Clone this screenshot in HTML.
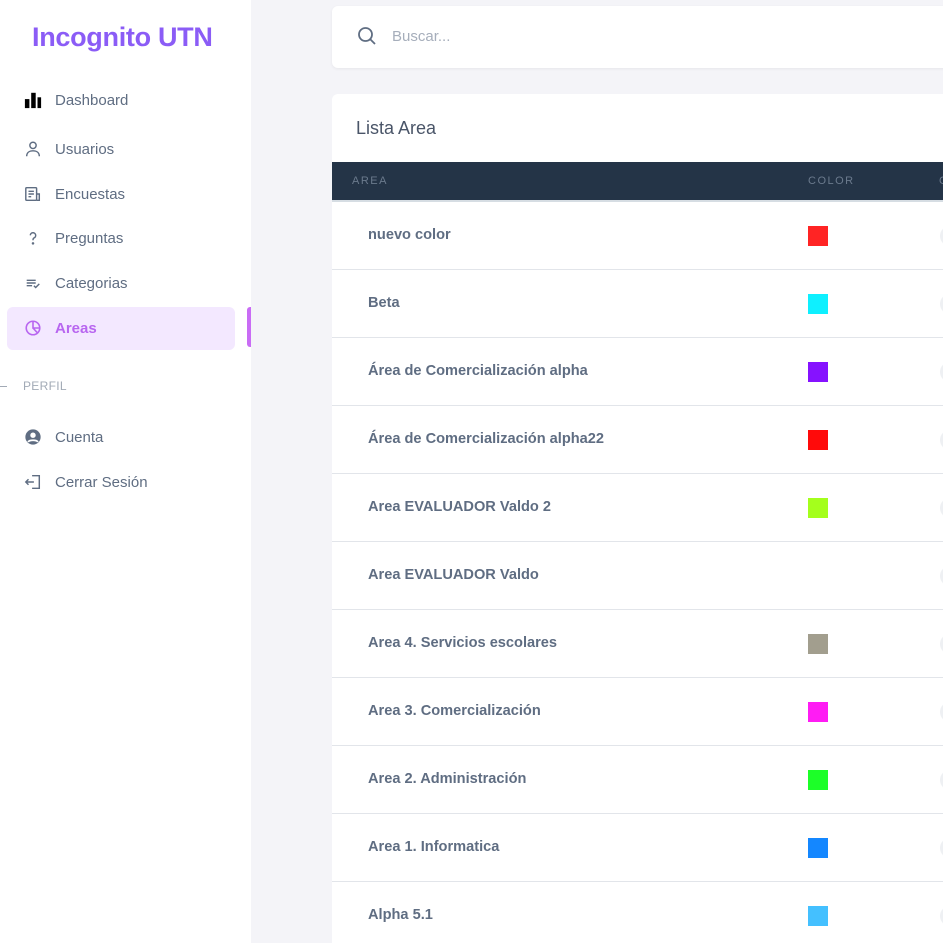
<!DOCTYPE html>
<html><head><meta charset="utf-8"><style>
*{box-sizing:border-box;margin:0;padding:0}
html,body{width:943px;height:943px;overflow:hidden}
body{background:#f4f4f8;font-family:"Liberation Sans",sans-serif;position:relative}
.side{position:absolute;left:0;top:0;width:251px;height:100%;background:#fff}
.logo{position:absolute;left:32px;top:22px;font-size:27px;font-weight:bold;color:#8b5cf6;letter-spacing:-0.3px}
.item{position:absolute;left:24px;height:24px;display:flex;align-items:center;font-size:15px;color:#5f6d82}
.item svg{width:18px;height:18px;margin-right:13px}
.active{position:absolute;left:7px;top:307px;width:228px;height:43px;background:#f3e8ff;border-radius:6px}
.bar{position:absolute;left:247px;top:307px;width:4px;height:40px;background:#c96cf5;border-radius:3px 0 0 3px}
.perfil{position:absolute;left:23px;top:379px;font-size:12px;color:#a2aab6;letter-spacing:.3px}
.dash{position:absolute;left:0;top:386px;width:7px;height:1px;background:#a2aab6}
.search{position:absolute;left:332px;top:6px;width:640px;height:62px;background:#fff;border-radius:6px;box-shadow:0 1px 3px rgba(0,0,0,.06)}
.search span{position:absolute;left:60px;top:22px;color:#a6aebb;font-size:15px}
.card{position:absolute;left:332px;top:94px;width:640px;height:870px;background:#fff;border-radius:6px}
.title{position:absolute;left:24px;top:24px;font-size:18px;color:#4a5568}
.th{position:absolute;left:0;top:68px;width:100%;height:40px;background:#243447;border-bottom:2px solid #d6dde3}
.th span{position:absolute;top:13px;font-size:11px;color:#6b7a8d;letter-spacing:1.5px}
.row{position:absolute;left:0;width:100%;height:68px;border-bottom:1px solid #e2e5ea}
.row b{position:absolute;left:36px;top:25px;font-size:14.6px;color:#5f6d82}
.row i{position:absolute;left:476px;top:24px;width:20px;height:20px}
.row u{position:absolute;left:608px;top:24px;width:20px;height:20px;border-radius:50%;background:#eef0f3}
</style></head><body>
<div class="side">
<div class="logo">Incognito UTN</div>
<div class="item" style="top:88px"><svg viewBox="0 0 20 20"><rect x="1" y="9" width="5" height="10" fill="#000"/><rect x="8" y="2" width="5" height="17" fill="#000"/><rect x="15" y="7" width="4" height="12" fill="#000"/></svg>Dashboard</div>
<div class="item" style="top:137px"><svg viewBox="0 0 20 20" fill="none" stroke="#5f6d82" stroke-width="1.6"><circle cx="10" cy="6" r="3.5"/><path d="M3 18c0-4 3-6 7-6s7 2 7 6"/></svg>Usuarios</div>
<div class="item" style="top:182px"><svg viewBox="0 0 20 20" fill="none" stroke="#5f6d82" stroke-width="1.6"><rect x="2" y="3" width="12" height="14" rx="1"/><path d="M5 7h6M5 10h6M5 13h3M14 10h3v7h-3"/></svg>Encuestas</div>
<div class="item" style="top:226px"><svg viewBox="0 0 20 20" fill="none" stroke="#5f6d82" stroke-width="1.6"><path d="M7 7a3 3 0 1 1 4 3c-1 .5-1 1-1 2.5"/><circle cx="10" cy="16" r=".6" fill="#5f6d82"/></svg>Preguntas</div>
<div class="item" style="top:271px"><svg viewBox="0 0 20 20" fill="none" stroke="#5f6d82" stroke-width="1.6"><path d="M3 7h10M3 10h10M3 13h6M11 13l2 2 4-4"/></svg>Categorias</div>
<div class="active"></div>
<div class="item" style="top:316px;color:#b866f0;font-weight:bold"><svg viewBox="0 0 20 20" fill="none" stroke="#b866f0" stroke-width="1.8"><circle cx="10" cy="10" r="7.5"/><path d="M10 2.5V10h7.5M10 10l5 5.5"/></svg>Areas</div>
<div class="bar"></div>
<div class="dash"></div><div class="perfil">PERFIL</div>
<div class="item" style="top:425px"><svg viewBox="0 0 20 20"><circle cx="10" cy="10" r="8.5" fill="#5f6d82"/><circle cx="10" cy="8" r="3" fill="#fff"/><path d="M4.5 15.5c1.5-2.5 9.5-2.5 11 0" stroke="#fff" stroke-width="2" fill="none"/></svg>Cuenta</div>
<div class="item" style="top:470px"><svg viewBox="0 0 20 20" fill="none" stroke="#5f6d82" stroke-width="1.6"><path d="M9 3h8v14H9M2 10h9M5 7l-3 3 3 3"/></svg>Cerrar Sesión</div>
</div>
<div class="search"><svg style="position:absolute;left:25px;top:20px" width="20" height="20" viewBox="0 0 20 20" fill="none" stroke="#5f6d82" stroke-width="1.8"><circle cx="8.5" cy="8.5" r="6.5"/><path d="M13.5 13.5l4.5 4.5"/></svg><span>Buscar...</span></div>
<div class="card">
<div class="title">Lista Area</div>
<div class="th"><span style="left:20px">AREA</span><span style="left:476px">COLOR</span><span style="left:607px">C</span></div>
<div class="row" style="top:108px"><b>nuevo color</b><i style="background:#ff2424"></i><u></u></div>
<div class="row" style="top:176px"><b>Beta</b><i style="background:#0ef0ff"></i><u></u></div>
<div class="row" style="top:244px"><b>Área de Comercialización alpha</b><i style="background:#8612ff"></i><u></u></div>
<div class="row" style="top:312px"><b>Área de Comercialización alpha22</b><i style="background:#ff0a0a"></i><u></u></div>
<div class="row" style="top:380px"><b>Area EVALUADOR Valdo 2</b><i style="background:#a4ff1c"></i><u></u></div>
<div class="row" style="top:448px"><b>Area EVALUADOR Valdo</b><u></u></div>
<div class="row" style="top:516px"><b>Area 4. Servicios escolares</b><i style="background:#a29e8e"></i><u></u></div>
<div class="row" style="top:584px"><b>Area 3. Comercialización</b><i style="background:#ff1cf4"></i><u></u></div>
<div class="row" style="top:652px"><b>Area 2. Administración</b><i style="background:#1cff28"></i><u></u></div>
<div class="row" style="top:720px"><b>Area 1. Informatica</b><i style="background:#1487ff"></i><u></u></div>
<div class="row" style="top:788px"><b>Alpha 5.1</b><i style="background:#44c0ff"></i><u></u></div>
</div>
</body></html>
